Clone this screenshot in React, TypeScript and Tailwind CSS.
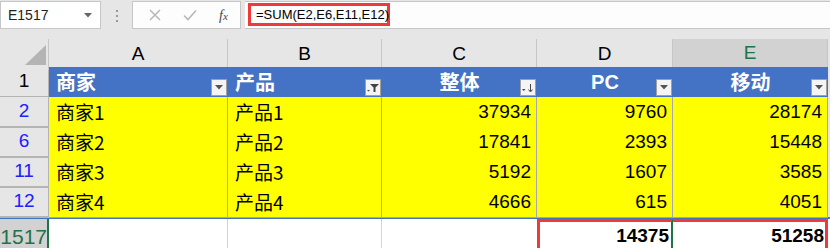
import React from "react";

const rows = [
  { n: "2", a: "商家1", b: "产品1", c: "37934", d: "9760", e: "28174" },
  { n: "6", a: "商家2", b: "产品2", c: "17841", d: "2393", e: "15448" },
  { n: "11", a: "商家3", b: "产品3", c: "5192", d: "1607", e: "3585" },
  { n: "12", a: "商家4", b: "产品4", c: "4666", d: "615", e: "4051" },
];

const grid = "grid grid-cols-[49px_179px_154px_155px_136px_155px_2px]";
const cjk = "font-['Noto_Sans_CJK_SC','Liberation_Sans',sans-serif]";
const num = "font-['Liberation_Sans','Noto_Sans_CJK_SC',sans-serif]";
const ycell = "flex items-center border-r border-b border-[#a6a6b4]";

function FilterBtn({ kind }: { kind: "arrow" | "filter" | "sort" }) {
  return (
    <span className="absolute right-[1px] bottom-[1px] flex h-[17px] w-[16px] items-center justify-center border border-[#a0a0a0] bg-[#f4f4f4]">
      {kind === "arrow" && (
        <svg width="8" height="5" viewBox="0 0 8 5"><path d="M0 0h8L4 4.5z" fill="#555" /></svg>
      )}
      {kind === "filter" && (
        <svg width="12" height="10" viewBox="0 0 12 10">
          <path d="M3 1h9L8.5 4.5V9h-2V4.5z" fill="#444" />
          <path d="M0 7h3L1.5 8.6z" fill="#444" />
        </svg>
      )}
      {kind === "sort" && (
        <svg width="12" height="10" viewBox="0 0 12 10">
          <path d="M0 6h3.5L1.75 8z" fill="#444" />
          <path d="M8.5 1v7" stroke="#444" strokeWidth="1" />
          <path d="M6.5 6.5L8.5 9l2-2.5" stroke="#444" strokeWidth="1" fill="none" />
        </svg>
      )}
    </span>
  );
}

export default function App() {
  return (
    <div className="h-[248px] w-[830px] overflow-hidden bg-[#e6e6e6]">
      {/* formula bar */}
      <div className="flex h-[39px] items-start pt-[1px]">
        <div className={`flex h-[28px] w-[101px] items-center justify-between border border-[#c6c6c6] bg-white pl-[7px] pr-[8px] text-[14px] text-[#222] ${num}`}>
          <span>E1517</span>
          <svg width="8" height="5" viewBox="0 0 8 5"><path d="M0 0h8L4 4.5z" fill="#666" /></svg>
        </div>
        <div className="flex w-[31px] flex-col items-center justify-center gap-[3px] pt-[9px]">
          <span className="h-[2px] w-[2px] bg-[#999]" />
          <span className="h-[2px] w-[2px] bg-[#999]" />
          <span className="h-[2px] w-[2px] bg-[#999]" />
        </div>
        <div className="flex h-[28px] w-[109px] items-center border border-[#c6c6c6] bg-[#fdfdfd] pl-[16px]">
          <svg width="12" height="12" viewBox="0 0 12 12"><path d="M1 1l10 10M11 1L1 11" stroke="#b8b8b8" strokeWidth="1.5" /></svg>
          <svg className="ml-[22px]" width="14" height="12" viewBox="0 0 14 12"><path d="M1 6.5l4 4L13 1.5" stroke="#b8b8b8" strokeWidth="1.6" fill="none" /></svg>
          <span className="ml-[22px] font-['Liberation_Serif',serif] text-[14px] italic text-[#444]">
            f<span className="text-[11px]">x</span>
          </span>
        </div>
        <div className="ml-[4px] flex h-[28px] flex-1 items-start border-y border-[#c6c6c6] bg-[#fdfdfd] pl-[3px] pt-[1px]">
          <div className={`flex h-[23px] w-[142px] items-center whitespace-nowrap border-[3px] border-[#f03a3a] pl-[5px] text-[13px] text-black ${num}`}>
            =SUM(E2,E6,E11,E12)
          </div>
        </div>
      </div>

      {/* column headers */}
      <div className={`${grid} h-[28px] text-[19px] ${num}`}>
        <div className="relative border-r border-[#c6c6c6]">
          <svg className="absolute left-[25px] top-[6px]" width="21" height="20" viewBox="0 0 21 20"><path d="M21 0V20H0z" fill="#b4b4b4" /></svg>
        </div>
        <div className="flex items-center justify-center border-r border-[#c6c6c6]">A</div>
        <div className="flex items-center justify-center border-r border-[#c6c6c6]">B</div>
        <div className="flex items-center justify-center border-r border-[#c6c6c6]">C</div>
        <div className="flex items-center justify-center border-r border-[#c6c6c6]">D</div>
        <div className="flex items-center justify-center border-r border-b-2 border-[#c6c6c6] border-b-[#217346] bg-[#d2d2d2] text-[#217346]">E</div>
        <div />
      </div>

      {/* header row 1 */}
      <div className={`${grid} h-[30px] text-[20px] font-bold text-white ${cjk}`}>
        <div className={`flex items-center justify-center border-r border-b border-[#b4b4b4] bg-[#e6e6e6] text-[19px] font-normal text-black ${num}`}>1</div>
        <div className="relative flex items-center bg-[#4472c4] pl-[7px]">商家<FilterBtn kind="arrow" /></div>
        <div className="relative flex items-center bg-[#4472c4] pl-[7px]">产品<FilterBtn kind="filter" /></div>
        <div className="relative flex items-center justify-center bg-[#4472c4]">整体<FilterBtn kind="sort" /></div>
        <div className={`relative flex items-center justify-center bg-[#4472c4] ${num}`}>PC<FilterBtn kind="arrow" /></div>
        <div className="relative flex items-center justify-center bg-[#4472c4]">移动<FilterBtn kind="arrow" /></div>
        <div />
      </div>

      {/* data rows */}
      {rows.map((r) => (
        <div key={r.n} className={`${grid} h-[30px] text-[19px] text-black`}>
          <div className={`flex items-center justify-center border-r border-b-2 border-[#b4b4b4] text-[#2020ff] ${num}`}>{r.n}</div>
          <div className={`${ycell} bg-[#ffff00] pl-[7px] ${cjk}`}>{r.a}</div>
          <div className={`${ycell} bg-[#ffff00] pl-[7px] ${cjk}`}>{r.b}</div>
          <div className={`${ycell} justify-end bg-[#ffff00] pr-[5px] ${num}`}>{r.c}</div>
          <div className={`${ycell} justify-end bg-[#ffff00] pr-[5px] ${num}`}>{r.d}</div>
          <div className={`${ycell} justify-end bg-[#ffff00] pr-[5px] ${num}`}>{r.e}</div>
          <div />
        </div>
      ))}

      {/* row 1517 */}
      <div className={`${grid} h-[31px] border-t-2 border-t-[#4472c4] bg-white text-[19px] font-bold text-black ${num}`}>
        <div className="flex items-center justify-end overflow-hidden border-r-2 border-[#217346] bg-[#d2d2d2] text-[21px] font-normal text-[#217346]">1517</div>
        <div className="border-r border-b border-[#d4d4d4]" />
        <div className="border-r border-b border-[#d4d4d4]" />
        <div className="border-b border-[#d4d4d4]" />
        <div className="flex items-center justify-end border-y-[3px] border-l-[3px] border-r-2 border-[#f03a3a] border-r-[#217346] pr-[2px]">14375</div>
        <div className="relative flex items-center justify-end border-y-[3px] border-r-[3px] border-[#f03a3a] pr-[1px]">
          51258
          <span className="absolute right-[-3px] bottom-[-3px] h-[5px] w-[5px] bg-[#217346]" />
        </div>
        <div />
      </div>
    </div>
  );
}
